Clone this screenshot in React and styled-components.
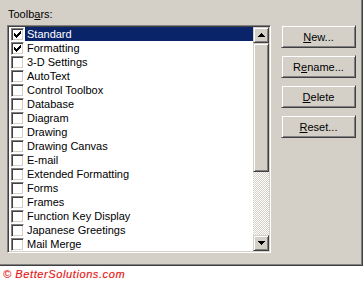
import React from 'react';
import styled, { createGlobalStyle } from 'styled-components';

const GlobalStyle = createGlobalStyle`
body {
  margin: 0;
  background: #fff;
  font-family: "Liberation Sans", Arial, sans-serif;
  font-size: 11px;
  color: #000;
}
`;

const Page = styled.div`
width: 364px;
height: 282px;
overflow: hidden;
`;

const Dialog = styled.div`
box-sizing: border-box;
width: 363px;
height: 266px;
display: flex;
padding: 7px 0 0 7px;
background: #d4d0c8;
box-shadow: inset -1px -1px #404040, inset -2px -2px #808080;
`;

const LeftPane = styled.div`
width: 264px;
display: flex;
flex-direction: column;
`;

const FieldLabel = styled.div`
height: 14px;
line-height: 14px;
padding-left: 1px;
`;

const ListBox = styled.div`
box-sizing: border-box;
margin-top: 4px;
width: 264px;
height: 228px;
padding: 1px;
display: flex;
border: 1px solid;
border-color: #808080 #fff #fff #808080;
box-shadow: inset 1px 1px #404040, inset -1px -1px #d4d0c8;
`;

const Items = styled.ul`
flex: 1;
margin: 0;
padding: 0;
list-style: none;
background: #fff;
overflow: hidden;
`;

const Row = styled.li`
display: flex;
align-items: flex-start;
height: 14px;
`;

const CheckBox = styled.span`
box-sizing: border-box;
flex: none;
width: 13px;
height: 13px;
margin: 1px 0 0 2px;
display: flex;
align-items: center;
justify-content: center;
background: #fff;
border: 1px solid;
border-color: #808080 #fff #fff #808080;
box-shadow: inset 1px 1px #404040, inset -1px -1px #d4d0c8;
`;

const ItemText = styled.span`
flex: 1;
margin-left: 1px;
padding-left: 2px;
height: 14px;
line-height: 14px;
white-space: nowrap;
background: ${(p) => (p.selected ? '#0a246a' : 'transparent')};
color: ${(p) => (p.selected ? '#fff' : '#000')};
`;

const ScrollBar = styled.div`
width: 16px;
display: flex;
flex-direction: column;
`;

const raised = `
box-sizing: border-box;
background: #d4d0c8;
border: 1px solid;
border-color: #d4d0c8 #404040 #404040 #d4d0c8;
box-shadow: inset 1px 1px #fff, inset -1px -1px #808080;
`;

const ArrowButton = styled.div`
${raised}
width: 16px;
height: 16px;
display: flex;
align-items: center;
justify-content: center;
`;

const Track = styled.div`
flex: 1;
display: flex;
flex-direction: column;
background: repeating-conic-gradient(#d4d0c8 0 25%, #fff 0 50%) 0 0 / 2px 2px;
`;

const Thumb = styled.div`
${raised}
width: 16px;
height: ${(p) => p.size}px;
`;

const Buttons = styled.div`
margin: 18px 0 0 10px;
display: flex;
flex-direction: column;
gap: 7px;
`;

const PushButton = styled.div`
${raised}
width: 75px;
height: 23px;
display: flex;
align-items: center;
justify-content: center;
`;

const Copyright = styled.div`
height: 16px;
padding-left: 3px;
line-height: 17px;
font-style: italic;
letter-spacing: 0.6px;
color: #e01818;
text-shadow: 0 0 1px #ffb0b0;
`;

const toolbars = [
  ['Standard', true],
  ['Formatting', true],
  ['3-D Settings', false],
  ['AutoText', false],
  ['Control Toolbox', false],
  ['Database', false],
  ['Diagram', false],
  ['Drawing', false],
  ['Drawing Canvas', false],
  ['E-mail', false],
  ['Extended Formatting', false],
  ['Forms', false],
  ['Frames', false],
  ['Function Key Display', false],
  ['Japanese Greetings', false],
  ['Mail Merge', false],
];

// classic 7x7 windows check mark
const CheckMark = () => (
  <svg width="7" height="7" viewBox="0 0 7 7" shapeRendering="crispEdges">
    <path d="M0 2h1v3H0zM1 3h1v3H1zM2 4h1v3H2zM3 3h1v3H3zM4 2h1v3H4zM5 1h1v3H5zM6 0h1v3H6z" fill="#000" />
  </svg>
);

const ArrowUp = () => (
  <svg width="7" height="4" viewBox="0 0 7 4" shapeRendering="crispEdges">
    <path d="M3 0h1v1H3zM2 1h3v1H2zM1 2h5v1H1zM0 3h7v1H0z" fill="#000" />
  </svg>
);

const ArrowDown = () => (
  <svg width="7" height="4" viewBox="0 0 7 4" shapeRendering="crispEdges">
    <path d="M0 0h7v1H0zM1 1h5v1H1zM2 2h3v1H2zM3 3h1v1H3z" fill="#000" />
  </svg>
);

function App() {
  return (
    <Page>
      <GlobalStyle />
      <Dialog>
        <LeftPane>
          <FieldLabel>
            Toolb
            <u>a</u>
            rs:
          </FieldLabel>
          <ListBox>
            <Items>
              {toolbars.map(([name, checked], i) => (
                <Row key={name}>
                  <CheckBox>{checked && <CheckMark />}</CheckBox>
                  <ItemText selected={i === 0}>{name}</ItemText>
                </Row>
              ))}
            </Items>
            <ScrollBar>
              <ArrowButton><ArrowUp /></ArrowButton>
              <Track>
                <Thumb size={129} />
              </Track>
              <ArrowButton><ArrowDown /></ArrowButton>
            </ScrollBar>
          </ListBox>
        </LeftPane>
        <Buttons>
          <PushButton><span><u>N</u>ew...</span></PushButton>
          <PushButton><span>R<u>e</u>name...</span></PushButton>
          <PushButton><span><u>D</u>elete</span></PushButton>
          <PushButton><span><u>R</u>eset...</span></PushButton>
        </Buttons>
      </Dialog>
      <Copyright>© BetterSolutions.com</Copyright>
    </Page>
  );
}

export default App;
